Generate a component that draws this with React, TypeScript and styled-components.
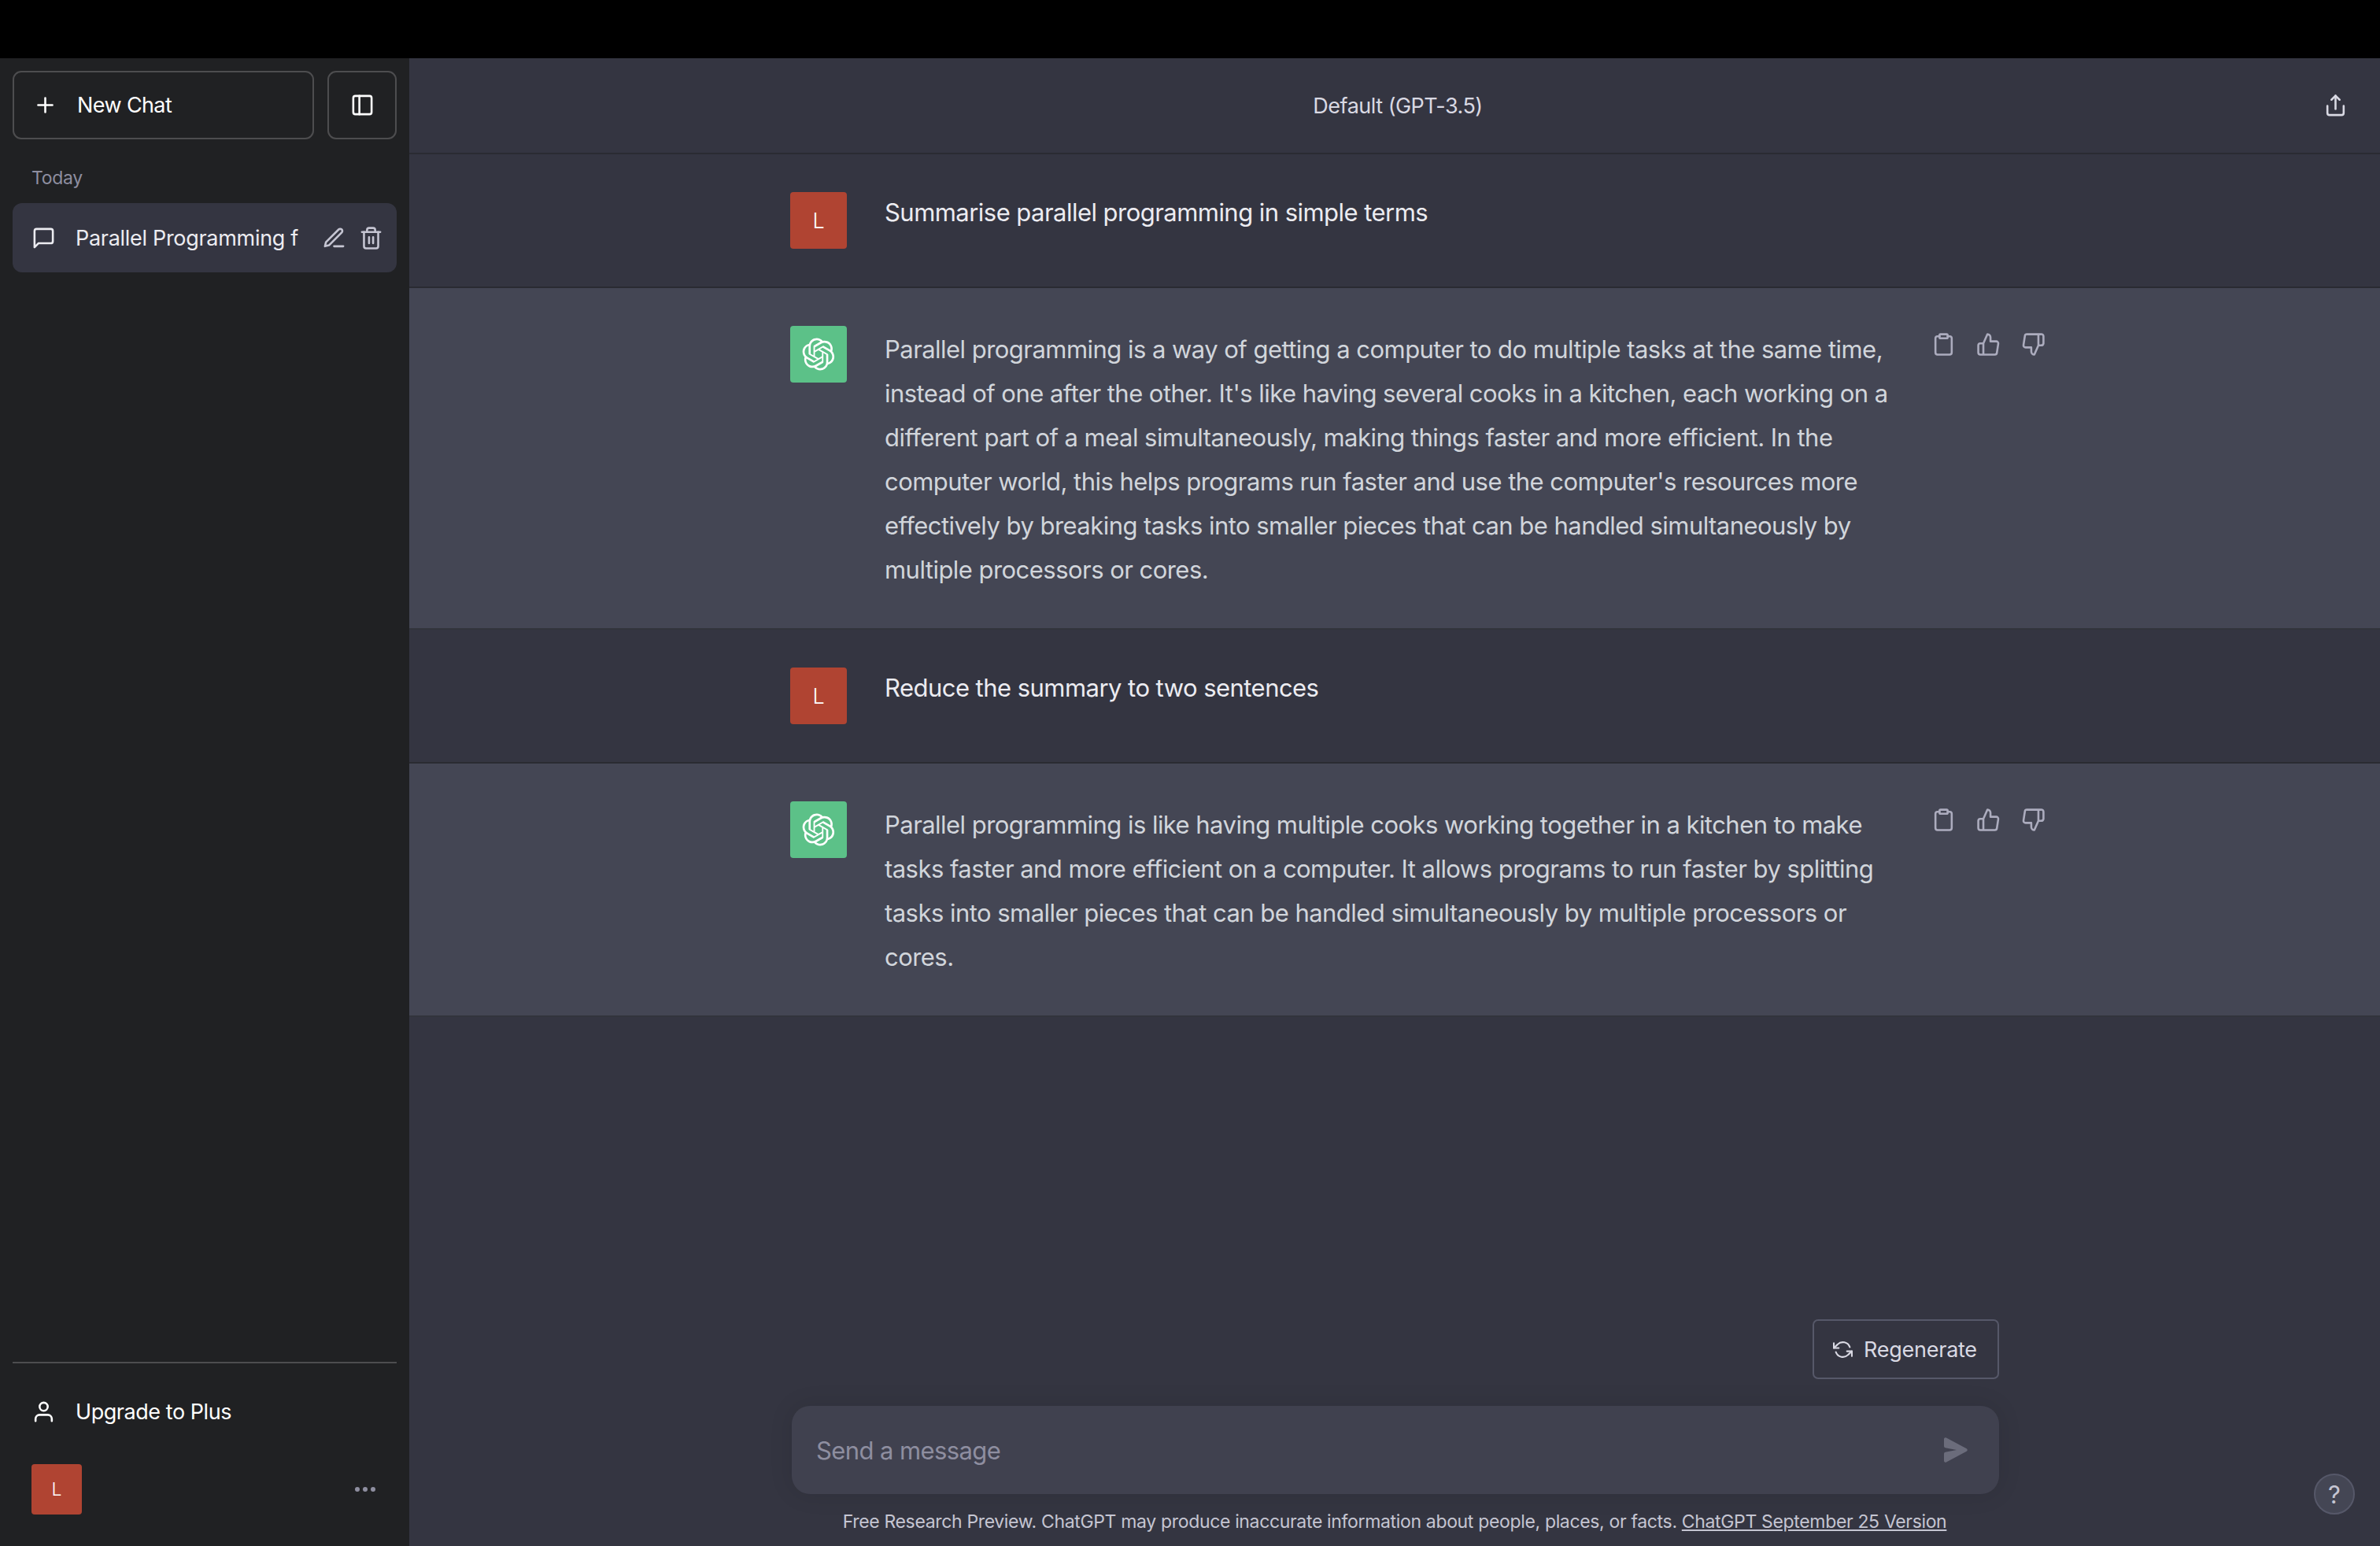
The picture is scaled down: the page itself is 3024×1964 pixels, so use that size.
import React from "react";
import styled, { createGlobalStyle } from "styled-components";

const GlobalStyle = createGlobalStyle`
  * { box-sizing: border-box; }
  html, body { margin: 0; padding: 0; background: #000; }
  body { font-family: Inter, "Liberation Sans", sans-serif; }
`;

const Page = styled.div`
  width: 3024px;
  height: 1964px;
  display: flex;
  flex-direction: column;
  background: #000;
  overflow: hidden;
`;

const TopStrip = styled.div`
  height: 74px;
  flex: none;
  background: #000;
`;

const Shell = styled.div`
  flex: 1;
  display: flex;
  min-height: 0;
`;

const Sidebar = styled.aside`
  width: 520px;
  flex: none;
  display: flex;
  flex-direction: column;
  padding: 16px 16px 0;
  background: #202123;
  color: #fff;
`;

const SideTop = styled.div`
  display: flex;
  gap: 17px;
`;

const OutlineButton = styled.button<{ $square?: boolean }>`
  height: 87px;
  flex: ${(p) => (p.$square ? "0 0 88px" : "1")};
  display: flex;
  align-items: center;
  justify-content: ${(p) => (p.$square ? "center" : "flex-start")};
  gap: 25px;
  padding: ${(p) => (p.$square ? "0" : "0 0 0 24px")};
  background: transparent;
  border: 2px solid #4d4d4f;
  border-radius: 11px;
  color: #fff;
  font: 400 27px Inter, "Liberation Sans", sans-serif;
  letter-spacing: -0.6px;
`;

const SectionLabel = styled.div`
  margin-top: 34px;
  padding-left: 24px;
  height: 47px;
  font-size: 23px;
  line-height: 30px;
  letter-spacing: -0.3px;
  color: #8e8ea0;
`;

const ChatItem = styled.div`
  height: 88px;
  display: flex;
  align-items: center;
  padding: 0 17px 0 24px;
  border-radius: 12px;
  background: #343541;
  color: #ececf1;
`;

const ChatTitle = styled.span`
  flex: 1;
  margin-left: 25px;
  font-size: 27px;
  letter-spacing: -0.3px;
  white-space: nowrap;
  overflow: hidden;
`;

const ChatActions = styled.div`
  display: flex;
  gap: 16px;
  color: #c5c5d2;
`;

const SideSpacer = styled.div`
  flex: 1;
`;

const SideFooter = styled.div`
  border-top: 2px solid #4d4d4f;
  height: 160px;
  flex: none;
  margin-bottom: 74px;
  padding: 0 8px;
`;

const UpgradeRow = styled.div`
  height: 122px;
  display: flex;
  align-items: center;
  gap: 25px;
  padding-left: 16px;
  font-size: 27px;
  letter-spacing: -0.45px;
  color: #fff;
`;

const ProfileRow = styled.div`
  display: flex;
  align-items: center;
  justify-content: space-between;
  padding: 6px 19px 0 16px;
`;

const Avatar = styled.div<{ $size: number; $bg: string; $font?: number }>`
  width: ${(p) => p.$size}px;
  height: ${(p) => p.$size}px;
  flex: none;
  display: flex;
  align-items: center;
  justify-content: center;
  border-radius: 4px;
  background: ${(p) => p.$bg};
  color: #fff;
  font-size: ${(p) => p.$font ?? 23}px;
  font-weight: 300;
`;

const Dots = styled.div`
  display: flex;
  gap: 4px;
`;

const Dot = styled.i`
  width: 6px;
  height: 6px;
  border-radius: 50%;
  background: #8e8ea0;
`;

const Main = styled.main`
  position: relative;
  flex: 1;
  min-width: 0;
  display: flex;
  flex-direction: column;
  background: #343541;
`;

const Header = styled.header`
  height: 122px;
  flex: none;
  display: flex;
  align-items: center;
  justify-content: space-between;
  padding: 0 41px 0 0;
  border-bottom: 2px solid rgba(32, 33, 35, 0.5);
  color: #d9d9e3;
`;

const HeaderTitle = styled.div`
  flex: 1;
  padding-left: 80px;
  text-align: center;
  font-size: 27px;
  letter-spacing: -0.5px;
`;

const MessageRow = styled.section<{ $bot?: boolean }>`
  flex: none;
  display: flex;
  padding: ${(p) => (p.$bot ? "48px 0 46px 484px" : "48px 0 48px 484px")};
  background: ${(p) => (p.$bot ? "#444654" : "#343541")};
  color: ${(p) => (p.$bot ? "#d1d5db" : "#ececf1")};
  border-bottom: 2px solid rgba(32, 33, 35, 0.5);
`;

const MessageText = styled.div<{ $bot?: boolean }>`
  width: 1296px;
  margin: ${(p) => (p.$bot ? "2px" : "-2px")} 0 0 48px;
  min-height: 72px;
  font-size: 31px;
  line-height: 56px;
  letter-spacing: -0.54px;
`;

const MessageActions = styled.div`
  display: flex;
  gap: 26px;
  height: 31px;
  margin: 8px 0 0 34px;
  color: #acacbe;
`;

const Spacer = styled.div`
  flex: 1;
`;

const Composer = styled.div`
  flex: none;
  width: 1536px;
  margin: 0 auto;
  display: flex;
  flex-direction: column;
  align-items: flex-end;
`;

const RegenerateButton = styled.button`
  width: 237px;
  height: 76px;
  display: flex;
  align-items: center;
  gap: 14px;
  padding: 0 0 0 24px;
  background: #343541;
  border: 2px solid #565869;
  border-radius: 7px;
  color: #d9d9e3;
  font: 400 27px Inter, "Liberation Sans", sans-serif;
  letter-spacing: -0.25px;
`;

const InputBox = styled.div`
  width: 1534px;
  height: 112px;
  margin-top: 34px;
  display: flex;
  align-items: center;
  justify-content: space-between;
  padding: 0 39px 0 31px;
  background: #40414f;
  border-radius: 23px;
  box-shadow: 0 0 30px rgba(0, 0, 0, 0.1);
  color: #8e8ea0;
  font-size: 31px;
  letter-spacing: -0.6px;
`;

const Disclaimer = styled.div`
  width: 100%;
  height: 66px;
  padding-top: 20px;
  text-align: center;
  font-size: 23px;
  line-height: 30px;
  letter-spacing: -0.34px;
  color: #c5c5d2;
`;

const VersionLink = styled.a`
  color: inherit;
  text-decoration: underline;
`;

const HelpButton = styled.div`
  position: absolute;
  right: 32px;
  bottom: 40px;
  width: 52px;
  height: 52px;
  display: flex;
  align-items: center;
  justify-content: center;
  border-radius: 50%;
  border: 2px solid #565869;
  background: #444654;
  color: #c5c5d2;
  font-size: 31px;
`;

const Glyph = styled.svg<{ $size?: number }>`
  width: ${(p) => p.$size ?? 31}px;
  height: ${(p) => p.$size ?? 31}px;
  flex: none;
  fill: none;
  stroke: currentColor;
  stroke-width: 2;
  stroke-linecap: round;
  stroke-linejoin: round;
`;

const Icon = ({ size, children }: { size?: number; children: React.ReactNode }) => (
  <Glyph $size={size} viewBox="0 0 24 24">
    {children}
  </Glyph>
);

const PlusIcon = () => (
  <Icon>
    <path d="M12 5v14M5 12h14" />
  </Icon>
);

const PanelIcon = () => (
  <Icon>
    <rect x="3" y="3" width="18" height="18" rx="2" />
    <path d="M9 3v18" />
  </Icon>
);

const ChatIcon = () => (
  <Icon>
    <path d="M21 15a2 2 0 0 1-2 2H7l-4 4V5a2 2 0 0 1 2-2h14a2 2 0 0 1 2 2z" />
  </Icon>
);

const PenIcon = () => (
  <Icon>
    <path d="M12 20h9" />
    <path d="M16.5 3.5a2.121 2.121 0 0 1 3 3L7 19l-4 1 1-4L16.5 3.5z" />
  </Icon>
);

const TrashIcon = () => (
  <Icon>
    <path d="M3 6h18" />
    <path d="M19 6v14a2 2 0 0 1-2 2H7a2 2 0 0 1-2-2V6m3 0V4a2 2 0 0 1 2-2h4a2 2 0 0 1 2 2v2" />
    <path d="M10 11v6M14 11v6" />
  </Icon>
);

const UserIcon = () => (
  <Icon>
    <path d="M20 21v-2a4 4 0 0 0-4-4H8a4 4 0 0 0-4 4v2" />
    <circle cx="12" cy="7" r="4" />
  </Icon>
);

const ShareIcon = () => (
  <Icon>
    <path d="M4 12v7a2 2 0 0 0 2 2h12a2 2 0 0 0 2-2v-7" />
    <path d="M16 6l-4-4-4 4" />
    <path d="M12 2v13" />
  </Icon>
);

const ClipboardIcon = () => (
  <Icon>
    <path d="M16 4h2a2 2 0 0 1 2 2v14a2 2 0 0 1-2 2H6a2 2 0 0 1-2-2V6a2 2 0 0 1 2-2h2" />
    <rect x="8" y="2" width="8" height="4" rx="1" />
  </Icon>
);

const ThumbUpIcon = () => (
  <Icon>
    <path d="M14 9V5a3 3 0 0 0-3-3l-4 9v11h11.28a2 2 0 0 0 2-1.7l1.38-9a2 2 0 0 0-2-2.3zM7 22H4a2 2 0 0 1-2-2v-7a2 2 0 0 1 2-2h3" />
  </Icon>
);

const ThumbDownIcon = () => (
  <Icon>
    <path d="M10 15v4a3 3 0 0 0 3 3l4-9V2H5.72a2 2 0 0 0-2 1.7l-1.38 9a2 2 0 0 0 2 2.3zm7-13h2.67A2.31 2.31 0 0 1 22 4v7a2.31 2.31 0 0 1-2.33 2H17" />
  </Icon>
);

const RefreshIcon = () => (
  <Icon size={25}>
    <path d="M1 4v6h6M23 20v-6h-6" />
    <path d="M20.49 9A9 9 0 0 0 5.64 5.64L1 10m22 4l-4.64 4.36A9 9 0 0 1 3.51 15" />
  </Icon>
);

const SendMark = styled.svg`
  width: 32px;
  height: 32px;
  fill: #6b6c7b;
`;

const SendIcon = () => (
  <SendMark viewBox="0 0 16 16">
    <path d="M.5 1.163A1 1 0 0 1 1.97.28l12.868 6.837a1 1 0 0 1 0 1.766L1.969 15.72A1 1 0 0 1 .5 14.836V10.33a1 1 0 0 1 .816-.983L8.5 8 1.316 6.653A1 1 0 0 1 .5 5.67V1.163Z" />
  </SendMark>
);

const LogoMark = styled.svg`
  width: 42px;
  height: 42px;
  fill: #fff;
`;

const OpenAiLogo = () => (
  <LogoMark viewBox="0 0 41 41">
    <path d="M37.5324 16.8707C37.9808 15.5241 38.1363 14.0974 37.9886 12.6859C37.8409 11.2744 37.3934 9.91076 36.676 8.68622C35.6126 6.83404 33.9882 5.3676 32.0373 4.4985C30.0864 3.62941 27.9098 3.40259 25.8215 3.85078C24.8796 2.7893 23.7219 1.94125 22.4257 1.36341C21.1295 0.785575 19.7249 0.491269 18.3058 0.500197C16.1708 0.495044 14.0893 1.16803 12.3614 2.42214C10.6335 3.67624 9.34853 5.44666 8.6917 7.47815C7.30085 7.76286 5.98686 8.3414 4.8377 9.17505C3.68854 10.0087 2.73073 11.0782 2.02839 12.312C0.956464 14.1591 0.498905 16.2988 0.721698 18.4228C0.944492 20.5467 1.83612 22.5449 3.268 24.1293C2.81966 25.4759 2.66413 26.9026 2.81182 28.3141C2.95951 29.7256 3.40701 31.0892 4.12437 32.3138C5.18791 34.1659 6.8123 35.6322 8.76321 36.5013C10.7141 37.3704 12.8907 37.5973 14.9789 37.1492C15.9208 38.2107 17.0786 39.0587 18.3747 39.6366C19.6709 40.2144 21.0755 40.5087 22.4946 40.4998C24.6307 40.5054 26.7133 39.8321 28.4418 38.5772C30.1704 37.3223 31.4556 35.5506 32.1119 33.5179C33.5027 33.2332 34.8167 32.6547 35.9659 31.821C37.115 30.9874 38.0728 29.9178 38.7752 28.684C39.8458 26.8371 40.3023 24.6979 40.0789 22.5748C39.8556 20.4517 38.9639 18.4544 37.5324 16.8707ZM22.4978 37.8849C20.7443 37.8874 19.0459 37.2733 17.6994 36.1501C17.7601 36.117 17.8666 36.0586 17.936 36.0161L25.9004 31.4156C26.1003 31.3019 26.2663 31.137 26.3813 30.9378C26.4964 30.7386 26.5563 30.5124 26.5549 30.2825V19.0542L29.9213 20.998C29.9389 21.0068 29.9541 21.0198 29.9656 21.0359C29.977 21.052 29.9842 21.0707 29.9867 21.0902V30.3889C29.9842 32.375 29.1946 34.2791 27.7909 35.6841C26.3872 37.0892 24.4838 37.8806 22.4978 37.8849ZM6.39227 31.0064C5.51397 29.4888 5.19742 27.7107 5.49804 25.9832C5.55718 26.0187 5.66048 26.0818 5.73461 26.1244L13.699 30.7248C13.8975 30.8408 14.1233 30.902 14.3532 30.902C14.583 30.902 14.8088 30.8408 15.0073 30.7248L24.731 25.1103V28.9979C24.7321 29.0177 24.7283 29.0376 24.7199 29.0556C24.7115 29.0736 24.6988 29.0893 24.6829 29.1012L16.6317 33.7497C14.9096 34.7416 12.8643 35.0097 10.9447 34.4954C9.02506 33.9811 7.38785 32.7263 6.39227 31.0064ZM4.29707 13.6194C5.17156 12.0998 6.55279 10.9364 8.19885 10.3327C8.19885 10.4013 8.19491 10.5228 8.19491 10.6071V19.808C8.19351 20.0378 8.25334 20.2638 8.36823 20.4629C8.48312 20.6619 8.64893 20.8267 8.84863 20.9404L18.5723 26.5542L15.206 28.4979C15.1894 28.5089 15.1703 28.5155 15.1505 28.5173C15.1307 28.5191 15.1107 28.516 15.0924 28.5082L7.04046 23.8557C5.32135 22.8601 4.06716 21.2235 3.55289 19.3046C3.03862 17.3858 3.30624 15.3413 4.29707 13.6194ZM31.955 20.0556L22.2312 14.4411L25.5976 12.4981C25.6142 12.4872 25.6333 12.4805 25.6531 12.4787C25.6729 12.4769 25.6928 12.4801 25.7111 12.4879L33.7631 17.1364C34.9967 17.849 36.0017 18.8982 36.6606 20.1613C37.3194 21.4244 37.6047 22.849 37.4832 24.2684C37.3617 25.6878 36.8382 27.0432 35.9743 28.1759C35.1103 29.3086 33.9415 30.1717 32.6047 30.6641C32.6047 30.5947 32.6047 30.4733 32.6047 30.3889V21.188C32.6066 20.9586 32.5474 20.7328 32.4332 20.5338C32.319 20.3348 32.154 20.1698 31.955 20.0556ZM35.3055 15.0128C35.2464 14.9765 35.1431 14.9142 35.069 14.8717L27.1045 10.2712C26.906 10.1554 26.6803 10.0943 26.4504 10.0943C26.2206 10.0943 25.9948 10.1554 25.7963 10.2712L16.0726 15.8858V11.9982C16.0715 11.9783 16.0753 11.9585 16.0837 11.9405C16.0921 11.9225 16.1048 11.9068 16.1207 11.8949L24.1719 7.25025C25.4053 6.53903 26.8158 6.19376 28.2383 6.25482C29.6608 6.31589 31.0364 6.78077 32.2044 7.59508C33.3723 8.40939 34.2842 9.53945 34.8334 10.8531C35.3826 12.1667 35.5464 13.6095 35.3055 15.0128ZM14.2424 21.9419L10.8752 19.9981C10.8576 19.9893 10.8423 19.9763 10.8309 19.9602C10.8195 19.9441 10.8122 19.9254 10.8098 19.9058V10.6071C10.8107 9.18295 11.2173 7.78848 11.9819 6.58696C12.7466 5.38544 13.8377 4.42659 15.1275 3.82264C16.4173 3.21869 17.8524 2.99464 19.2649 3.1767C20.6775 3.35876 22.0089 3.93941 23.1034 4.85067C23.0427 4.88379 22.937 4.94215 22.8668 4.98473L14.9024 9.58517C14.7025 9.69878 14.5366 9.86356 14.4215 10.0626C14.3065 10.2616 14.2466 10.4877 14.2479 10.7175L14.2424 21.9419ZM16.071 17.9991L20.4018 15.4978L24.7325 17.9975V22.9985L20.4018 25.4983L16.071 22.9985V17.9991Z" />
  </LogoMark>
);

const messages = [
  { bot: false, text: "Summarise parallel programming in simple terms" },
  {
    bot: true,
    text: "Parallel programming is a way of getting a computer to do multiple tasks at the same time, instead of one after the other. It's like having several cooks in a kitchen, each working on a different part of a meal simultaneously, making things faster and more efficient. In the computer world, this helps programs run faster and use the computer's resources more effectively by breaking tasks into smaller pieces that can be handled simultaneously by multiple processors or cores.",
  },
  { bot: false, text: "Reduce the summary to two sentences" },
  {
    bot: true,
    text: "Parallel programming is like having multiple cooks working together in a kitchen to make tasks faster and more efficient on a computer. It allows programs to run faster by splitting tasks into smaller pieces that can be handled simultaneously by multiple processors or cores.",
  },
];

export default function App() {
  return (
    <Page>
      <GlobalStyle />
      <TopStrip />
      <Shell>
        <Sidebar>
          <SideTop>
            <OutlineButton>
              <PlusIcon />
              New Chat
            </OutlineButton>
            <OutlineButton $square>
              <PanelIcon />
            </OutlineButton>
          </SideTop>
          <SectionLabel>Today</SectionLabel>
          <ChatItem>
            <ChatIcon />
            <ChatTitle>Parallel Programming f</ChatTitle>
            <ChatActions>
              <PenIcon />
              <TrashIcon />
            </ChatActions>
          </ChatItem>
          <SideSpacer />
          <SideFooter>
            <UpgradeRow>
              <UserIcon />
              Upgrade to Plus
            </UpgradeRow>
            <ProfileRow>
              <Avatar $size={64} $bg="#b04432" $font={23}>
                L
              </Avatar>
              <Dots>
                <Dot />
                <Dot />
                <Dot />
              </Dots>
            </ProfileRow>
          </SideFooter>
        </Sidebar>
        <Main>
          <Header>
            <HeaderTitle>Default (GPT-3.5)</HeaderTitle>
            <ShareIcon />
          </Header>
          {messages.map((m, i) => (
            <MessageRow key={i} $bot={m.bot}>
              {m.bot ? (
                <Avatar $size={72} $bg="#5cc188">
                  <OpenAiLogo />
                </Avatar>
              ) : (
                <Avatar $size={72} $bg="#b04432" $font={27}>
                  L
                </Avatar>
              )}
              <MessageText $bot={m.bot}>{m.text}</MessageText>
              {m.bot && (
                <MessageActions>
                  <ClipboardIcon />
                  <ThumbUpIcon />
                  <ThumbDownIcon />
                </MessageActions>
              )}
            </MessageRow>
          ))}
          <Spacer />
          <Composer>
            <RegenerateButton>
              <RefreshIcon />
              Regenerate
            </RegenerateButton>
            <InputBox>
              Send a message
              <SendIcon />
            </InputBox>
            <Disclaimer>
              Free Research Preview. ChatGPT may produce inaccurate information about people, places, or facts.{" "}
              <VersionLink>ChatGPT September 25 Version</VersionLink>
            </Disclaimer>
          </Composer>
          <HelpButton>?</HelpButton>
        </Main>
      </Shell>
    </Page>
  );
}
